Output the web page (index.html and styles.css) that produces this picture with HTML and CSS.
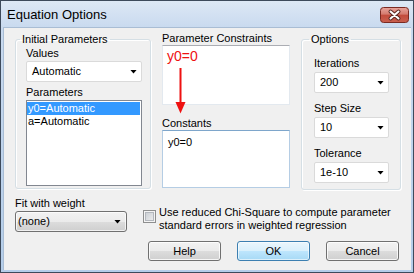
FILE: index.html
```html
<!DOCTYPE html>
<html lang="en">
<head>
    <meta charset="UTF-8">
    <title>Equation Options</title>
    <link rel="stylesheet" href="styles.css">
</head>
<body>
    <div class="window">
        <div class="titlebar">
            <span class="title">Equation Options</span>
            <div class="close-btn">
                <svg width="29" height="16" viewBox="0 0 29 16">
                    <defs>
                        <linearGradient id="closeGrad" x1="0" y1="0" x2="0" y2="1">
                            <stop offset="0" stop-color="#e8a59c"/>
                            <stop offset="0.45" stop-color="#d47a6e"/>
                            <stop offset="0.5" stop-color="#c24b3c"/>
                            <stop offset="1" stop-color="#c9604f"/>
                        </linearGradient>
                    </defs>
                    <rect x="0.5" y="0.5" width="28" height="15" rx="3" fill="url(#closeGrad)" stroke="#7a2a22"/>
                    <path d="M10.5 4.5 L18.5 11.5 M18.5 4.5 L10.5 11.5" stroke="#5a2620" stroke-width="4" stroke-linecap="round"/>
                    <path d="M10.5 4.5 L18.5 11.5 M18.5 4.5 L10.5 11.5" stroke="#ffffff" stroke-width="2" stroke-linecap="round"/>
                </svg>
            </div>
        </div>

        <div class="client">
            <div class="top-row">
                <fieldset class="group init-group">
                    <legend>Initial Parameters</legend>
                    <div class="field-label">Values</div>
                    <div class="combo"><span>Automatic</span><i class="drop"></i></div>
                    <div class="field-label params-label">Parameters</div>
                    <ul class="listbox">
                        <li class="selected">y0=Automatic</li>
                        <li>a=Automatic</li>
                    </ul>
                </fieldset>

                <div class="middle">
                    <div class="field-label">Parameter Constraints</div>
                    <div class="textbox constraints"><span class="red-text">y0=0</span></div>
                    <div class="field-label constants-label">Constants</div>
                    <div class="textbox constants">y0=0</div>
                    <svg class="red-arrow" width="11" height="46" viewBox="0 0 11 46">
                        <rect x="4.5" y="0" width="2" height="36" fill="#ee1111"/>
                        <polygon points="0.5,34 10.5,34 5.5,45.5" fill="#ee1111"/>
                    </svg>
                </div>

                <fieldset class="group options-group">
                    <legend>Options</legend>
                    <div class="field-label">Iterations</div>
                    <div class="combo small"><span>200</span><i class="drop"></i></div>
                    <div class="field-label">Step Size</div>
                    <div class="combo small"><span>10</span><i class="drop"></i></div>
                    <div class="field-label">Tolerance</div>
                    <div class="combo small"><span>1e-10</span><i class="drop"></i></div>
                </fieldset>
            </div>

            <div class="bottom-row">
                <div class="weight">
                    <div class="field-label">Fit with weight</div>
                    <div class="dropdown"><span>(none)</span><i class="drop"></i></div>
                </div>
                <div class="actions">
                    <div class="check-row">
                        <span class="checkbox"></span>
                        <span class="check-text">Use reduced Chi-Square to compute parameter<br>standard errors in weighted regression</span>
                    </div>
                    <div class="buttons">
                        <button class="btn">Help</button>
                        <button class="btn default">OK</button>
                        <button class="btn">Cancel</button>
                    </div>
                </div>
            </div>
        </div>
    </div>
</body>
</html>
```

FILE: styles.css
```css
body {
    margin: 0;
    padding: 0;
    font-family: 'Liberation Sans', Arial, sans-serif;
    font-size: 11px;
    line-height: 13px;
    color: #000;
    background: #ffffff;
}

.window {
    width: 414px;
    height: 273px;
    box-sizing: border-box;
    border: 1px solid #3d4a5b;
    padding: 0 2px 2px 2px;
    background: linear-gradient(to bottom, #dde8f5, #c9daef 26px, #b4cde9);
    display: flex;
    flex-direction: column;
}

/* title bar */
.titlebar {
    height: 26px;
    display: flex;
    align-items: center;
    justify-content: space-between;
    padding-left: 4px;
}

.title {
    font-size: 13px;
    line-height: 16px;
    margin-top: 1px;
}

.close-btn {
    display: flex;
    margin-right: 2px;
    margin-top: 1px;
}

/* client area */
.client {
    flex: 1;
    background: #f0f0f0;
    padding: 5px 10px 0 12px;
    box-shadow: inset 1px 1px 0 #a9bdd4;
}

.top-row {
    display: flex;
    align-items: flex-start;
}

.field-label {
    height: 13px;
    margin-bottom: 2px;
    white-space: nowrap;
}

/* group boxes */
.group {
    margin: 1px 0 0 0;
    border: 1px solid #d5dfe5;
    border-radius: 3px;
    box-shadow: inset 1px 1px 0 #fff, 1px 1px 0 #fff;
    min-width: 0;
}

.group legend {
    padding: 0 2px;
    margin-left: -6px;
    line-height: 13px;
}

.init-group {
    width: 116px;
    padding: 1px 8px 2px 10px;
}

.init-group .field-label {
    margin-bottom: 1px;
}

.init-group .params-label {
    margin-top: 4px;
    margin-bottom: 1px;
}

.options-group {
    width: 75px;
    padding: 11px 11px 6px 12px;
    margin-left: 11px;
}

.options-group legend {
    margin-left: -5px;
}

.options-group .combo {
    margin-bottom: 9px;
}

.options-group .combo:last-child {
    margin-bottom: 0;
}

/* combo boxes */
.combo {
    height: 21px;
    box-sizing: border-box;
    border: 1px solid #dadada;
    border-radius: 2px;
    background: #fff;
    display: flex;
    align-items: center;
    justify-content: space-between;
    padding: 0 4px 0 5px;
}

.drop {
    display: block;
    width: 7px;
    height: 4px;
    background: #000;
    clip-path: polygon(0 0, 100% 0, 50% 100%);
}

/* list box */
.listbox {
    list-style: none;
    margin: 0;
    padding: 1px 1px 1px 0;
    height: 86px;
    box-sizing: border-box;
    border: 1px solid #828790;
    background: #fff;
}

.listbox li {
    height: 13px;
    padding-left: 1px;
}

.listbox li.selected {
    background: #3399ff;
    color: #fff;
}

/* middle column */
.middle {
    position: relative;
    width: 128px;
    margin-left: 11px;
}

.middle .field-label {
    margin-bottom: 0;
}

.textbox {
    box-sizing: border-box;
    border: 1px solid #e3e9ef;
    border-top-color: #abadb3;
    background: #fff;
}

.constraints {
    height: 60px;
    padding: 2px 4px;
}

.red-text {
    color: #ee1111;
    font-size: 14px;
    line-height: 16px;
}

.constants-label {
    margin-top: 12px;
}

.constants {
    height: 58px;
    padding: 5px 5px;
    border-color: #b5cde4;
    border-top-color: #7ea6cb;
}

.red-arrow {
    position: absolute;
    left: 13px;
    top: 36px;
}

/* bottom section */
.bottom-row {
    display: flex;
    align-items: flex-start;
    margin-top: 7px;
}

.weight {
    width: 112px;
}

.weight .field-label {
    margin-bottom: 1px;
}

.dropdown {
    height: 21px;
    box-sizing: border-box;
    border: 1px solid #707070;
    border-radius: 3px;
    background: linear-gradient(to bottom, #f2f2f2 0%, #ebebeb 50%, #dddddd 50%, #cfcfcf 100%);
    box-shadow: inset 0 0 0 1px rgba(255, 255, 255, 0.7);
    display: flex;
    align-items: center;
    justify-content: space-between;
    padding: 0 5px 0 2px;
}

.actions {
    margin-left: 16px;
    padding-top: 9px;
}

.check-row {
    display: flex;
    align-items: flex-start;
}

.checkbox {
    width: 13px;
    height: 13px;
    box-sizing: border-box;
    margin-top: 4px;
    margin-right: 3px;
    border: 1px solid #8e8f8f;
    background: linear-gradient(135deg, #c4c9cf, #f2f2f2);
    box-shadow: inset 0 0 0 1px #f4f4f4, inset 0 0 0 2px #b3b7bd;
}

.check-text {
    white-space: nowrap;
}

.buttons {
    display: flex;
    gap: 16px;
    margin-top: 9px;
    padding-left: 5px;
}

.btn {
    width: 73px;
    height: 20px;
    padding: 0;
    font-family: inherit;
    font-size: 11px;
    color: #000;
    border: 1px solid #707070;
    border-radius: 3px;
    background: linear-gradient(to bottom, #f2f2f2 0%, #ebebeb 50%, #dddddd 50%, #cfcfcf 100%);
    box-shadow: inset 0 0 0 1px rgba(255, 255, 255, 0.8);
}

.btn.default {
    border-color: #3c7fb1;
    background: linear-gradient(to bottom, #eaf6fd 0%, #d9f0fc 50%, #bee6fd 50%, #a7d9f5 100%);
    box-shadow: inset 0 0 0 1px rgba(255, 255, 255, 0.6);
}
```
